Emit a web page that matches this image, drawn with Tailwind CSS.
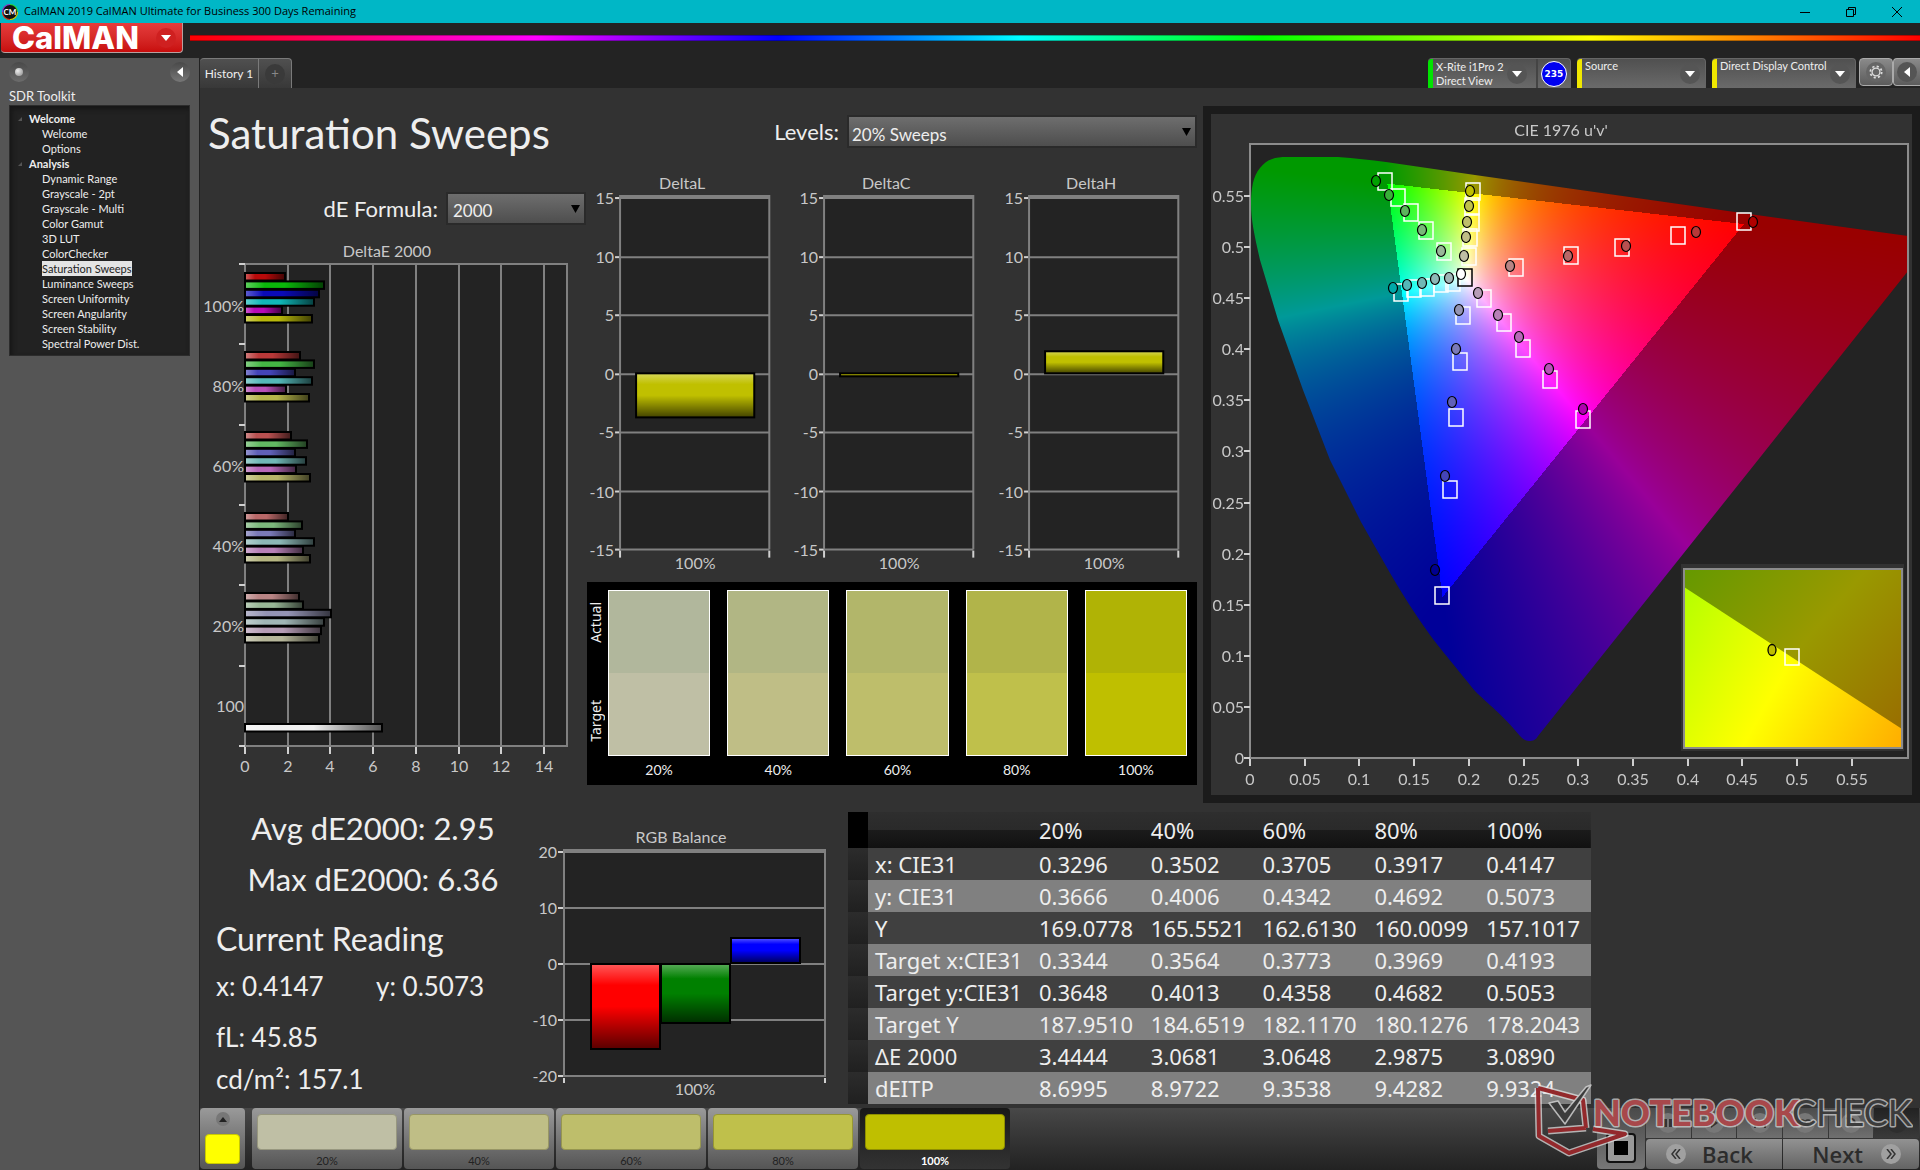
<!DOCTYPE html>
<html lang="en">

<head>
  <meta charset="UTF-8">
  <meta name="viewport" content="width=device-width, initial-scale=1.0">
  <title>CalMAN 2019 CalMAN Ultimate for Business 300 Days Remaining</title>
  <script src="https://cdn.jsdelivr.net/npm/@tailwindcss/browser@4"></script>
</head>

<body class="min-h-screen flex flex-col bg-[#232323] text-[#eeeeee] font-['Lato',sans-serif] overflow-x-hidden">

  <!-- Window title bar -->
  <div class="h-[23px] shrink-0 bg-[#00b7c6] text-black flex items-center pl-[2px]">
    <svg class="w-4 h-4 mr-[6px]" viewBox="0 0 16 16">
      <circle cx="8" cy="8" r="8" fill="#2bd42b" />
      <path d="M8 0a8 8 0 0 0-8 8h8z" fill="#8a2be2" />
      <path d="M0 8a8 8 0 0 0 8 8V8z" fill="#d22" />
      <path d="M8 16a8 8 0 0 0 8-8H8z" fill="#e8c800" />
      <circle cx="8" cy="8" r="7" fill="#111" />
      <text x="8" y="11" font-size="8" font-weight="bold" fill="#fff" text-anchor="middle">CM</text>
    </svg>
    <span class="font-['Open_Sans',sans-serif] text-[11px] flex-1 whitespace-nowrap">CalMAN 2019 CalMAN Ultimate for Business 300 Days Remaining</span>
    <button class="w-[46px] flex justify-center" aria-label="Minimize"><svg class="w-[10px] h-[10px]" viewBox="0 0 10 10"><path d="M0 5.500h10" stroke="#000" /></svg></button>
    <button class="w-[46px] flex justify-center" aria-label="Restore"><svg class="w-[10px] h-[10px]" viewBox="0 0 10 10" fill="none" stroke="#000"><path d="M.5 2.500h7v7h-7zM2.500 2V.5h7v7H8" /></svg></button>
    <button class="w-[46px] flex justify-center" aria-label="Close"><svg class="w-[10px] h-[10px]" viewBox="0 0 10 10"><path d="M0 0l10 10M10 0L0 10" stroke="#000" /></svg></button>
  </div>

  <!-- Logo and spectrum line -->
  <div class="h-[35px] shrink-0 flex items-start">
    <button class="w-[182px] h-[30px] ml-px mr-[7px] shrink-0 rounded-b bg-gradient-to-b from-[#e53c3c] to-[#c80c0c] border-b border-r border-[#b9a0a0] flex items-center justify-between pl-[11px] pr-[6px]">
      <span class="font-['Inter',sans-serif] font-extrabold text-[31px] leading-[28px] text-white">CalMAN</span>
      <span class="w-5 h-5 rounded-full bg-[#cf2020] flex items-center justify-center"><svg class="w-[10px] h-[6px]" viewBox="0 0 10 6"><path d="M0 0h10L5 6z" fill="#fff" /></svg></span>
    </button>
    <div class="flex-1 h-[6px] mt-3 border-y border-black/30 bg-[linear-gradient(90deg,#ff0000_0%,#ff00ff_20%,#0000ff_34%,#00ffff_48%,#00ff00_62%,#ffff00_81%,#ff0000_100%)]"></div>
  </div>

  <div class="flex-1 flex">
    <!-- Sidebar -->
    <aside class="w-[200px] shrink-0 bg-[#555555] border-r border-[#222]">
      <div class="flex justify-between px-[9px] pt-1">
        <button class="w-5 h-5 rounded-full bg-gradient-to-b from-[#494949] to-[#6c6c6c] flex items-center justify-center" aria-label="Pin"><span class="w-2 h-2 rounded-full bg-[radial-gradient(circle_at_35%_35%,#eee,#888)]"></span></button>
        <button class="w-5 h-5 rounded-full bg-gradient-to-b from-[#494949] to-[#777] flex items-center justify-center" aria-label="Collapse"><svg class="w-[6px] h-[10px]" viewBox="0 0 6 10"><path d="M6 0v10L0 5z" fill="#fff" /></svg></button>
      </div>
      <h2 class="pl-[9px] pt-[6px] text-[13px] leading-[17px]">SDR Toolkit</h2>
      <nav class="mx-[9px] h-[251px] bg-[#222] border border-[#2c2c2c] pt-[5px] text-[11px] leading-[15px] shadow-[inset_2px_3px_5px_#161616]">
        <h3 class="font-bold flex items-center gap-[7px] pl-2"><svg class="w-1 h-1" viewBox="0 0 4 4"><path d="M4 0v4H0z" fill="#555" /></svg>Welcome</h3>
        <ul class="pl-8 flex flex-col items-start">
          <li><a href="#">Welcome</a></li>
          <li><a href="#">Options</a></li>
        </ul>
        <h3 class="font-bold flex items-center gap-[7px] pl-2"><svg class="w-1 h-1" viewBox="0 0 4 4"><path d="M4 0v4H0z" fill="#555" /></svg>Analysis</h3>
        <ul class="pl-8 flex flex-col items-start whitespace-nowrap">
          <li><a href="#">Dynamic Range</a></li>
          <li><a href="#">Grayscale - 2pt</a></li>
          <li><a href="#">Grayscale - Multi</a></li>
          <li><a href="#">Color Gamut</a></li>
          <li><a href="#">3D LUT</a></li>
          <li><a href="#">ColorChecker</a></li>
          <li class="bg-[#e4e4e4] text-[#222]"><a href="#">Saturation Sweeps</a></li>
          <li><a href="#">Luminance Sweeps</a></li>
          <li><a href="#">Screen Uniformity</a></li>
          <li><a href="#">Screen Angularity</a></li>
          <li><a href="#">Screen Stability</a></li>
          <li><a href="#">Spectral Power Dist.</a></li>
        </ul>
      </nav>
    </aside>

    <div class="flex-1 min-w-0 flex flex-col">
      <!-- Tabs and device bar -->
      <div class="h-[30px] shrink-0 flex">
        <button class="w-[59px] bg-gradient-to-b from-[#505050] to-[#383838] border-t border-r border-[#7a7a7a] rounded-tl whitespace-nowrap text-[12px]">History 1</button>
        <button class="w-[33px] bg-gradient-to-b from-[#505050] to-[#383838] border-t border-r border-[#7a7a7a] rounded-tr flex items-center justify-center" aria-label="Add history"><span class="w-5 h-5 rounded-full bg-[#3a3a3a] text-[#888] text-[13px] leading-[19px]">+</span></button>
        <div class="flex-1"></div>
        <div class="w-[143px] flex rounded-t bg-gradient-to-b from-[#505050] to-[#6a6a6a] border-t border-r border-[#666] text-[11px] leading-[14px]">
          <div class="w-[5px] bg-[#00e400] rounded-tl"></div>
          <button class="flex-1 flex items-center justify-between text-left pl-[3px] pr-[9px] border-r-2 border-[#444] whitespace-nowrap">
            <span>X-Rite i1Pro 2<br>Direct View</span>
            <span class="w-5 h-5 rounded-full bg-[#555] flex items-center justify-center"><svg class="w-[10px] h-[6px]" viewBox="0 0 10 6"><path d="M0 0h10L5 6z" fill="#fff" /></svg></span>
          </button>
          <div class="w-[32px] flex items-center justify-center"><span class="w-[26px] h-[26px] rounded-full bg-[#0000f0] border border-white text-white font-['DejaVu_Sans',sans-serif] font-bold text-[9px] leading-6 text-center">235</span></div>
        </div>
        <button class="w-[129px] ml-[6px] flex rounded-t bg-gradient-to-b from-[#505050] to-[#6a6a6a] border-t border-r border-[#666] text-[11px] leading-[14px]">
          <span class="w-[5px] h-full bg-[#f0e800] rounded-tl"></span>
          <span class="flex-1 text-left pl-[3px]">Source</span>
          <span class="w-5 h-5 mt-[5px] mr-[5px] rounded-full bg-[#555] flex items-center justify-center"><svg class="w-[10px] h-[6px]" viewBox="0 0 10 6"><path d="M0 0h10L5 6z" fill="#fff" /></svg></span>
        </button>
        <button class="w-[144px] ml-[6px] flex rounded-t bg-gradient-to-b from-[#505050] to-[#6a6a6a] border-t border-r border-[#666] text-[11px] leading-[14px]">
          <span class="w-[5px] h-full bg-[#f0e800] rounded-tl"></span>
          <span class="flex-1 text-left pl-[3px] whitespace-nowrap">Direct Display Control</span>
          <span class="w-5 h-5 mt-[5px] mr-[5px] rounded-full bg-[#555] flex items-center justify-center"><svg class="w-[10px] h-[6px]" viewBox="0 0 10 6"><path d="M0 0h10L5 6z" fill="#fff" /></svg></span>
        </button>
        <button class="w-[34px] h-7 ml-[3px] rounded border border-[#aaa] bg-gradient-to-b from-[#8a8a8a] to-[#5c5c5c] flex items-center justify-center" aria-label="Settings">
          <span class="w-5 h-5 rounded-full bg-[#666] flex items-center justify-center"><svg class="w-[14px] h-[14px]" viewBox="0 0 16 16" fill="none" stroke="#ddd"><circle cx="8" cy="8" r="4.500" stroke-width="1.500" /><circle cx="8" cy="8" r="6.500" stroke-width="2" stroke-dasharray="2.500 2.600" /></svg></span>
        </button>
        <button class="w-[27px] h-7 rounded-l border border-r-0 border-[#aaa] bg-gradient-to-b from-[#8a8a8a] to-[#5c5c5c] flex items-center justify-center" aria-label="Collapse panel">
          <span class="w-5 h-5 rounded-full bg-[#555] flex items-center justify-center"><svg class="w-[6px] h-[10px]" viewBox="0 0 6 10"><path d="M6 0v10L0 5z" fill="#fff" /></svg></span>
        </button>
      </div>

      <main class="flex-1 bg-[#323232]">
        <div class="grid grid-cols-[minmax(0,387fr)_minmax(0,613fr)_minmax(0,720fr)]">
          <!-- Title, formula and deltaE chart -->
          <section>
            <h1 class="pl-2 pt-4 h-[96px] text-[42px] leading-[58px] whitespace-nowrap">Saturation Sweeps</h1>
            <div class="flex items-center justify-end h-[48px] pr-px">
              <label for="formula" class="text-[22px] mr-2">dE Formula:</label>
              <div class="relative">
                <select id="formula" class="appearance-none w-[140px] h-[33px] pl-[5px] pt-1 bg-gradient-to-b from-[#6e6e6e] to-[#4e4e4e] border-2 border-[#2a2a2a] text-[17px]">
                  <option>2000</option>
                </select>
                <svg class="absolute right-[6px] top-[13px] w-[9px] h-[8px]" viewBox="0 0 9 8"><path d="M0 0h9L4.500 8z" fill="#000" /></svg>
              </div>
            </div>
            <svg id="deltaE" class="w-full mt-2" viewBox="0 0 387 545" font-size="16" fill="#c8c8c8"></svg>
          </section>

          <!-- Levels, L/C/H charts and swatches -->
          <section>
            <div class="flex items-center justify-end h-[82px] pt-[5px] pr-[3px]">
              <label for="levels" class="text-[22px] mr-2 pb-[1px]">Levels:</label>
              <div class="relative">
                <select id="levels" class="appearance-none w-[350px] h-[33px] pl-[3px] pt-[5px] bg-gradient-to-b from-[#6e6e6e] to-[#4e4e4e] border-2 border-[#2a2a2a] text-[17px]">
                  <option>20% Sweeps</option>
                </select>
                <svg class="absolute right-[6px] top-[13px] w-[9px] h-[8px]" viewBox="0 0 9 8"><path d="M0 0h9L4.500 8z" fill="#000" /></svg>
              </div>
            </div>
            <div class="grid grid-cols-3">
              <svg id="deltaL" class="w-full" viewBox="0 0 204 411" font-size="16" fill="#c8c8c8"></svg>
              <svg id="deltaC" class="w-full" viewBox="0 0 204 411" font-size="16" fill="#c8c8c8"></svg>
              <svg id="deltaH" class="w-full" viewBox="0 0 204 411" font-size="16" fill="#c8c8c8"></svg>
            </div>
            <div class="bg-black h-[203px] mr-[3px] flex pt-2 pr-[10px] text-[14px]">
              <div class="w-[21px] h-[166px] shrink-0 flex flex-col-reverse justify-between items-center pt-3 pb-[14px] pr-1 font-['Noto_Sans',sans-serif] text-[14px] leading-[18px]">
                <span class="[writing-mode:vertical-rl] rotate-180">Target</span>
                <span class="[writing-mode:vertical-rl] rotate-180">Actual</span>
              </div>
              <div class="flex-1 grid grid-cols-5 gap-x-[17px] text-center">
                <div><div class="h-[166px] border border-white flex flex-col mb-[3px]"><div class="flex-1 bg-[#b1b79c]"></div><div class="flex-1 bg-[#bfbfa5]"></div></div>20%</div>
                <div><div class="h-[166px] border border-white flex flex-col mb-[3px]"><div class="flex-1 bg-[#b1b684]"></div><div class="flex-1 bg-[#bfbe86]"></div></div>40%</div>
                <div><div class="h-[166px] border border-white flex flex-col mb-[3px]"><div class="flex-1 bg-[#b2b66a]"></div><div class="flex-1 bg-[#bebe6b]"></div></div>60%</div>
                <div><div class="h-[166px] border border-white flex flex-col mb-[3px]"><div class="flex-1 bg-[#b1b44a]"></div><div class="flex-1 bg-[#bfc04b]"></div></div>80%</div>
                <div><div class="h-[166px] border border-white flex flex-col mb-[3px]"><div class="flex-1 bg-[#b0b305]"></div><div class="flex-1 bg-[#bfbf00]"></div></div>100%</div>
              </div>
            </div>
          </section>

          <!-- CIE diagram -->
          <section class="mt-[18px] ml-[3px] border-8 border-[#1b1b1b] self-start">
            <svg id="cie" class="w-full" viewBox="0 0 701 681" font-size="16" fill="#c8c8c8">
              <rect x="39" y="30" width="658" height="614" fill="#232323" />
              <foreignObject x="39" y="30" width="658" height="614"><canvas id="locus" width="658" height="614" class="w-full h-full"></canvas></foreignObject>
              <rect x="39" y="30" width="658" height="614" fill="none" stroke="#8c8c8c" stroke-width="2" />
              <text x="350" y="22" text-anchor="middle">CIE 1976 u'v'</text>
              <g id="cieMarks"></g>
              <!-- Zoomed inset -->
              <defs>
                <linearGradient id="insetIn" gradientUnits="userSpaceOnUse" x1="474" y1="483" x2="698" y2="609">
                  <stop offset="0" stop-color="#b8ff00" /><stop offset=".48" stop-color="#ffff00" /><stop offset="1" stop-color="#ffb000" />
                </linearGradient>
                <linearGradient id="insetOut" gradientUnits="userSpaceOnUse" x1="478" y1="455" x2="675" y2="624">
                  <stop offset="0" stop-color="#669900" /><stop offset=".52" stop-color="#999900" /><stop offset="1" stop-color="#997000" />
                </linearGradient>
              </defs>
              <rect x="470" y="450" width="223" height="187" fill="#323232" />
              <rect x="473" y="455" width="218" height="179" fill="url(#insetOut)" />
              <path d="M473 473L691 615V634H473z" fill="url(#insetIn)" />
              <rect x="473" y="455" width="218" height="179" fill="none" stroke="#8c8c8c" stroke-width="2" />
              <rect x="574" y="535" width="14" height="16" fill="none" stroke="#fff" stroke-width="1.500" />
              <ellipse cx="561" cy="536" rx="4" ry="5.500" fill="#bfbf00" stroke="#000" stroke-width="1.300" />
            </svg>
          </section>
        </div>

        <div class="grid grid-cols-[minmax(0,330fr)_minmax(0,318fr)_minmax(0,743fr)_minmax(0,329fr)]">
          <!-- Readings -->
          <section class="pl-4 text-[26px] leading-[36px] whitespace-nowrap">
            <div class="w-[314px] text-center text-[31px] leading-[51px]">
              <p>Avg dE2000: 2.95</p>
              <p>Max dE2000: 6.36</p>
            </div>
            <h2 class="text-[32px] leading-[40px] mt-[14px]">Current Reading</h2>
            <div class="flex mt-[9px]">
              <p class="w-[160px]">x: 0.4147</p>
              <p>y: 0.5073</p>
            </div>
            <p class="mt-[15px]">fL: 45.85</p>
            <p class="mt-[6px]">cd/m²: 157.1</p>
          </section>

          <svg id="rgb" class="w-full mt-[3px]" viewBox="0 0 318 297" font-size="16" fill="#c8c8c8"></svg>

          <!-- Measurement table -->
          <section class="pt-[9px] font-['Noto_Sans',sans-serif]">
            <table class="w-full table-fixed text-left text-[22px] whitespace-nowrap">
              <colgroup>
                <col class="w-[20px]"><col class="w-[164px]"><col><col><col><col><col>
              </colgroup>
              <thead>
                <tr class="h-9 bg-[linear-gradient(#2e2e2e_0%,#2a2a2a_49%,#1b1b1b_50%,#111_100%)]">
                  <th class="bg-black"></th><th></th>
                  <th class="pl-[7px] font-normal leading-[30px]">20%</th><th class="pl-[7px] font-normal leading-[30px]">40%</th><th class="pl-[7px] font-normal leading-[30px]">60%</th><th class="pl-[7px] font-normal leading-[30px]">80%</th><th class="pl-[7px] font-normal leading-[30px]">100%</th>
                </tr>
              </thead>
              <tbody id="rows"></tbody>
            </table>
          </section>
        </div>
      </main>

      <!-- Pattern bar -->
      <footer class="relative h-[62px] shrink-0 flex bg-gradient-to-b from-[#484848] to-[#222222] text-[11px] leading-[14px] text-[#222]">
        <button class="w-[45px] mb-px rounded bg-gradient-to-b from-[#9a9a9a] to-[#555] flex flex-col items-center pt-1" aria-label="Current patch">
          <span class="w-[14px] h-[14px] rounded-full bg-[#777] flex items-center justify-center"><svg class="w-2 h-[5px]" viewBox="0 0 8 5"><path d="M0 5h8L4 0z" fill="#222" /></svg></span>
          <span class="w-[35px] h-[30px] mt-2 rounded-sm bg-[#ffff00] border border-[#c8c800]"></span>
        </button>
        <button class="w-[150px] ml-[7px] mb-px rounded bg-gradient-to-b from-[#9a9a9a] to-[#555] px-[5px] pt-[5px]"><span class="block h-9 mb-1 rounded-sm bg-[#bfbfa5] border border-[#97977f]"></span>20%</button>
        <button class="w-[150px] ml-[2px] mb-px rounded bg-gradient-to-b from-[#9a9a9a] to-[#555] px-[5px] pt-[5px]"><span class="block h-9 mb-1 rounded-sm bg-[#bfbe86] border border-[#979665]"></span>40%</button>
        <button class="w-[150px] ml-[2px] mb-px rounded bg-gradient-to-b from-[#9a9a9a] to-[#555] px-[5px] pt-[5px]"><span class="block h-9 mb-1 rounded-sm bg-[#bebe6b] border border-[#96964f]"></span>60%</button>
        <button class="w-[150px] ml-[2px] mb-px rounded bg-gradient-to-b from-[#9a9a9a] to-[#555] px-[5px] pt-[5px]"><span class="block h-9 mb-1 rounded-sm bg-[#bfc04b] border border-[#979733]"></span>80%</button>
        <button class="w-[150px] ml-[2px] mb-px rounded bg-gradient-to-b from-[#181818] to-[#333] px-[5px] pt-[5px] text-white font-bold"><span class="block h-9 mb-1 rounded-sm bg-[#bfbf00] border border-[#8f8f00]"></span>100%</button>
        <div class="flex-1"></div>
        <button class="w-[48px] mb-px mr-px rounded bg-gradient-to-b from-[#4a4a4a] to-[#777] flex items-end justify-center pb-[6px]" aria-label="Stop">
          <span class="w-[30px] h-[30px] rounded border-2 border-[#111] bg-[#999] flex items-center justify-center"><span class="w-[14px] h-[14px] bg-black"></span></span>
        </button>
        <div class="w-[273px] mr-px flex flex-col gap-px">
          <div class="h-[30px] grid grid-cols-6 gap-px">
            <button class="bg-gradient-to-b from-[#4c4c4c] to-[#707070] flex items-center justify-center" aria-label="Pause"><span class="w-5 h-5 rounded-full bg-[#777] flex items-center justify-center"><svg class="w-[10px] h-[10px]" viewBox="0 0 10 10"><path d="M1 1h3v8H1zM6 1h3v8H6z" fill="#333" /></svg></span></button>
            <button class="bg-gradient-to-b from-[#4c4c4c] to-[#707070] flex items-center justify-center" aria-label="Play"><span class="w-5 h-5 rounded-full bg-[#777] flex items-center justify-center"><svg class="w-[10px] h-[10px]" viewBox="0 0 10 10"><path d="M2 0l7 5-7 5z" fill="#333" /></svg></span></button>
            <button class="bg-gradient-to-b from-[#4c4c4c] to-[#707070] flex items-center justify-center" aria-label="Play all"><span class="w-5 h-5 rounded-full bg-[#777] flex items-center justify-center"><svg class="w-3 h-[10px]" viewBox="0 0 12 10"><path d="M0 0h2v10H0zM10 0h2v10h-2zM4 2l5 3-5 3z" fill="#333" /></svg></span></button>
            <button class="bg-gradient-to-b from-[#4c4c4c] to-[#707070] flex items-center justify-center" aria-label="Continuous"><span class="w-5 h-5 rounded-full bg-[#777] flex items-center justify-center"><svg class="w-[14px] h-2" viewBox="0 0 14 8" fill="none" stroke="#333" stroke-width="1.500"><circle cx="4" cy="4" r="3" /><circle cx="10" cy="4" r="3" /></svg></span></button>
            <button class="bg-gradient-to-b from-[#4c4c4c] to-[#707070] flex items-center justify-center" aria-label="Refresh"><span class="w-5 h-5 rounded-full bg-[#777] flex items-center justify-center"><svg class="w-3 h-3" viewBox="0 0 12 12" fill="none" stroke="#333" stroke-width="2"><path d="M2 7a4 4 0 1 0 2-5M1 1l3 1-1 3" /></svg></span></button>
            <button class="bg-gradient-to-b from-[#222] to-[#3a3a3a] flex items-center justify-center" aria-label="Options"><span class="w-5 h-5 rounded-full bg-[#2e2e2e]"></span></button>
          </div>
          <div class="h-[30px] grid grid-cols-2 gap-px font-['Open_Sans',sans-serif] font-semibold text-[22px] leading-[28px] text-[#2c2c2c]">
            <button class="rounded-l bg-gradient-to-b from-[#929292] to-[#646464] flex items-center pl-5 gap-4"><span class="w-5 h-5 rounded-full bg-[#a0a0a0] flex items-center justify-center"><svg class="w-[10px] h-[10px]" viewBox="0 0 10 10" fill="none" stroke="#333" stroke-width="1.500"><path d="M5 0L1 5l4 5M9 0L5 5l4 5" /></svg></span>Back</button>
            <button class="rounded-r bg-gradient-to-b from-[#929292] to-[#646464] flex items-center justify-end pr-[18px] gap-[18px]">Next<span class="w-5 h-5 rounded-full bg-[#a0a0a0] flex items-center justify-center"><svg class="w-[10px] h-[10px]" viewBox="0 0 10 10" fill="none" stroke="#333" stroke-width="1.500"><path d="M1 0l4 5-4 5M5 0l4 5-4 5" /></svg></span></button>
          </div>
        </div>

        <!-- Watermark -->
        <svg class="absolute right-[7px] bottom-[11px] w-[380px] h-[76px] pointer-events-none" viewBox="0 0 380 76" stroke-linejoin="round">
          <g fill="none">
            <path d="M5 5L50 17L53 45M5 5l1 48 30 17 56-19-32-5M53 45L15 48" stroke="#e8e8e8" stroke-opacity=".7" stroke-width="7" />
            <path d="M5 5L50 17L53 45M5 5l1 48 30 17 56-19-32-5M53 45L15 48" stroke="#93292c" stroke-width="4" />
          </g>
          <path d="M16 20l9-2 7 11L53 4l5-2L32 41z" fill="#3c3c3c" stroke="#d8d8d8" stroke-opacity=".8" stroke-width="1.500" />
          <g font-family="Lato" font-size="36" stroke="#ddd" stroke-opacity=".7" stroke-width="3" paint-order="stroke">
            <text x="60" y="43" font-weight="900" fill="#a8484b">NOTEBOOK</text>
            <text x="259" y="43" fill="#3c3c3c">CHECK</text>
          </g>
        </svg>
      </footer>
    </div>
  </div>

  <script>
    const byId = (id) => document.getElementById(id);
    const line = (x1, y1, x2, y2, color = '#808080', w = 2) => `<path d="M${x1} ${y1}L${x2} ${y2}" stroke="${color}" stroke-width="${w}"/>`;
    const text = (x, y, t, anchor = 'middle') => `<text x="${x}" y="${y}" text-anchor="${anchor}">${t}</text>`;

    // glossy bar, shaded left to right or top to bottom
    let gradId = 0;
    const bar = (x, y, w, h, color, horizontal) => {
      const id = 'g' + gradId++;
      const dir = horizontal ? 'x2="1" y2="0"' : 'x2="0" y2="1"';
      return `<linearGradient id="${id}" ${dir}><stop offset="0" stop-color="#fff" stop-opacity=".35"/><stop offset=".25" stop-color="#fff" stop-opacity="0"/><stop offset=".5" stop-color="#000" stop-opacity="0"/><stop offset="1" stop-color="#000" stop-opacity=".65"/></linearGradient>
        <rect x="${x}" y="${y}" width="${w}" height="${h}" fill="${color}"/><rect x="${x}" y="${y}" width="${w}" height="${h}" fill="url(#${id})" stroke="#000" stroke-width="2"/>`;
    };

    // DeltaE 2000
    const groups = [
      ['100%', 33, ['#b80a0a', '#0ab80a', '#0a0ab8', '#10b8b8', '#b80ab8', '#b8b80a'], [40, 79, 74, 69, 37, 67]],
      ['80%', 112, ['#b83838', '#44b644', '#4444b8', '#54b8b8', '#b850b8', '#b6b64a'], [55, 69, 50, 67, 41, 64]],
      ['60%', 192, ['#b85050', '#62b862', '#6060b8', '#70b8b6', '#b868b8', '#b8b668'], [46, 62, 50, 61, 51, 65]],
      ['40%', 273, ['#b86868', '#7cb87c', '#7a7ab8', '#8cb8b6', '#b880b8', '#b6b682'], [43, 57, 50, 69, 58, 65]],
      ['20%', 353, ['#b88484', '#98b696', '#9494b4', '#a0b6b6', '#b69cb6', '#b6b69a'], [54, 58, 86, 79, 76, 74]],
      ['100', 484, ['#f0f0f0'], [137]],
    ];
    let out = '<rect x="45" y="24" width="322" height="482" fill="#232323"/>' + text(187, 17, 'DeltaE 2000');
    for (let i = 0; i < 8; i++) {
      const x = Math.round(45 + i * 42.7);
      out += line(x, 24, x, 506) + line(x, 507, x, 514, '#d0d0d0') + text(x, 532, i * 2);
    }
    out += '<rect x="45" y="24" width="322" height="482" fill="none" stroke="#808080" stroke-width="2"/>';
    groups.forEach(([name, top, colors, widths], i) => {
      out += text(44, 72 + i * 80, name, 'end');
      colors.forEach((c, k) => out += bar(45, top + k * 8.4, widths[k], 7.500, c, true));
    });
    for (let i = 0; i < 7; i++) out += line(39, Math.round(24 + i * 80.3), 45, Math.round(24 + i * 80.3), '#d0d0d0');
    byId('deltaE').innerHTML = out;

    // DeltaL / DeltaC / DeltaH
    const delta = (name, y, h) => {
      let s = '<rect x="33" y="25" width="149" height="354" fill="#232323"/>' + text(95, 19, name);
      [15, 10, 5, 0, -5, -10, -15].forEach((v, i) => {
        const gy = Math.round(28 + i * 58.500);
        s += line(33, gy, 182, gy) + line(28, gy, 33, gy, '#d0d0d0') + text(27, gy + 6, v, 'end');
      });
      s += line(33, 26, 182, 26) + line(33, 25, 33, 379) + line(182, 25, 182, 379) + line(33, 380, 33, 387, '#d0d0d0') + line(182, 380, 182, 387, '#d0d0d0');
      return s + bar(49, y, 118, h, '#c0c000') + text(108, 398, '100%');
    };
    byId('deltaL').innerHTML = delta('DeltaL', 203, 44);
    byId('deltaC').innerHTML = delta('DeltaC', 203, 3);
    byId('deltaH').innerHTML = delta('DeltaH', 181, 22);

    // RGB balance
    out = '<rect x="34" y="43" width="261" height="228" fill="#232323"/>' + text(151, 37, 'RGB Balance');
    [20, 10, 0, -10, -20].forEach((v, i) => {
      const gy = 46 + i * 56;
      out += line(34, gy, 295, gy) + line(28, gy, 34, gy, '#d0d0d0') + text(27, gy + 6, v, 'end');
    });
    out += line(34, 44, 295, 44) + line(34, 43, 34, 271) + line(295, 43, 295, 271) + line(34, 272, 34, 277, '#d0d0d0') + line(295, 272, 295, 277, '#d0d0d0');
    out += bar(61, 158, 69, 85, '#ff0000') + bar(131, 158, 69, 59, '#008000') + bar(201, 132, 69, 25, '#0000ff') + text(165, 289, '100%');
    byId('rgb').innerHTML = out;

    // Table rows
    const data = [
      ['x: CIE31', '0.3296', '0.3502', '0.3705', '0.3917', '0.4147'],
      ['y: CIE31', '0.3666', '0.4006', '0.4342', '0.4692', '0.5073'],
      ['Y', '169.0778', '165.5521', '162.6130', '160.0099', '157.1017'],
      ['Target x:CIE31', '0.3344', '0.3564', '0.3773', '0.3969', '0.4193'],
      ['Target y:CIE31', '0.3648', '0.4013', '0.4358', '0.4682', '0.5053'],
      ['Target Y', '187.9510', '184.6519', '182.1170', '180.1276', '178.2043'],
      ['ΔE 2000', '3.4444', '3.0681', '3.0648', '2.9875', '3.0890'],
      ['dEITP', '8.6995', '8.9722', '9.3538', '9.4282', '9.9324'],
    ];
    byId('rows').innerHTML = data.map((r, i) => `<tr class="h-8 ${i % 2 ? 'bg-[#808080]' : 'bg-[#404040]'}"><td class="bg-gradient-to-b from-[#2c2c2c] to-[#202020]"></td>${r.map((c) => `<td class="pl-[7px] leading-[30px]">${c}</td>`).join('')}</tr>`).join('');

    // Chromaticity diagram: u' = x / 1094.5, v' = (614 - y) / 1022
    const cv = byId('locus');
    const ctx = cv.getContext('2d');
    const img = ctx.createImageData(658, 614);
    for (let y = 0; y < 614; y++) {
      for (let x = 0; x < 658; x++) {
        const u = x / 1094.5, v = (614 - y) / 1022 || 0.001;
        const X = 9 * u / (4 * v), Z = (12 - 3 * u - 20 * v) / (4 * v);
        const rgb = [3.2406 * X - 1.5372 - 0.4986 * Z, -0.9689 * X + 1.8758 + 0.0415 * Z, 0.0557 * X - 0.204 + 1.057 * Z];
        const dim = Math.min(...rgb) < 0 ? 0.6 : 1;
        const max = Math.max(...rgb);
        const p = (y * 658 + x) * 4;
        for (let k = 0; k < 3; k++) img.data[p + k] = 255 * dim * Math.max(0, rgb[k]) / max;
        img.data[p + 3] = 255;
      }
    }
    const tmp = document.createElement('canvas');
    tmp.width = 658;
    tmp.height = 614;
    tmp.getContext('2d').putImageData(img, 0, 0);
    ctx.clip(new Path2D('M279 597C275 597 272 594 270 592C252 570 238 560 225 547C205 522 192 507 180 491C165 470 152 450 140 429L111 378L80 316L53 246L28 176L10 116C4 90 1 75 1 60C1 45 3 32 10 24C17 15 25 13 37 13H88C105 14 120 16 136 18L225 31L492 69L658 92V127L508 316L288 592C286 596 283 597 279 597z'));
    ctx.drawImage(tmp, 0, 0);

    // Axis labels, then [target x, y, measured x, y, fill] in plot pixels
    out = '';
    for (let i = 0; i < 12; i++) {
      const x = Math.round(39 + i * 54.7), y = Math.round(644 - i * 51.1), label = +(i * 0.05).toFixed(2);
      out += line(x, 645, x, 652, '#d0d0d0') + text(x, 671, label) + line(33, y, 39, y, '#d0d0d0') + text(33, y + 6, label, 'end');
    }
    const points = [
      [135, 37, 126, 37, '#00a000'], [148, 53, 139, 51, '#38b038'], [161, 68, 155, 67, '#5cb45c'], [176, 86, 172, 86, '#78b878'], [194, 107, 191, 107, '#98b898'],
      [223, 47, 220, 47, '#bfbf00'], [222, 62, 219, 62, '#bfc04b'], [222, 78, 217, 78, '#bebe6b'], [220, 93, 216, 93, '#bfbe86'], [219, 112, 214, 112, '#bfbfa5'],
      [494, 77, 503, 78, '#b00000'], [428, 91, 446, 88, '#b83838'], [372, 103, 376, 102, '#b85050'], [321, 111, 318, 112, '#b86868'], [266, 123, 260, 122, '#b88484'],
      [151, 148, 143, 144, '#00a8a8'], [164, 144, 157, 141, '#54b8b8'], [177, 143, 172, 139, '#70b8b6'], [191, 139, 185, 135, '#8cb8b6'], [203, 138, 199, 134, '#a0b6b6'],
      [234, 154, 228, 149, '#b69cb6'], [254, 178, 248, 171, '#b880b8'], [273, 204, 269, 193, '#b868b8'], [300, 235, 299, 225, '#b850b8'], [333, 275, 333, 265, '#b000b0'],
      [213, 171, 209, 166, '#9494b4'], [210, 217, 206, 205, '#7a7ab8'], [206, 273, 202, 258, '#6060b8'], [200, 345, 195, 332, '#4444b8'], [192, 451, 185, 426, '#000090'],
      [215, 133, 211, 130, '#ffffff'],
    ];
    out += '<g transform="translate(39 30)">';
    points.forEach(([x, y], i) => out += `<rect x="${x - 7}" y="${y - 8}" width="14" height="17" fill="none" stroke="${i === 30 ? '#000' : '#fff'}" stroke-width="1.500"/>`);
    points.forEach((p) => out += `<ellipse cx="${p[2]}" cy="${p[3]}" rx="4.500" ry="5.500" fill="${p[4]}" stroke="#000" stroke-width="1.200"/>`);
    byId('cieMarks').innerHTML = out + '</g>';
  </script>
</body>

</html>
